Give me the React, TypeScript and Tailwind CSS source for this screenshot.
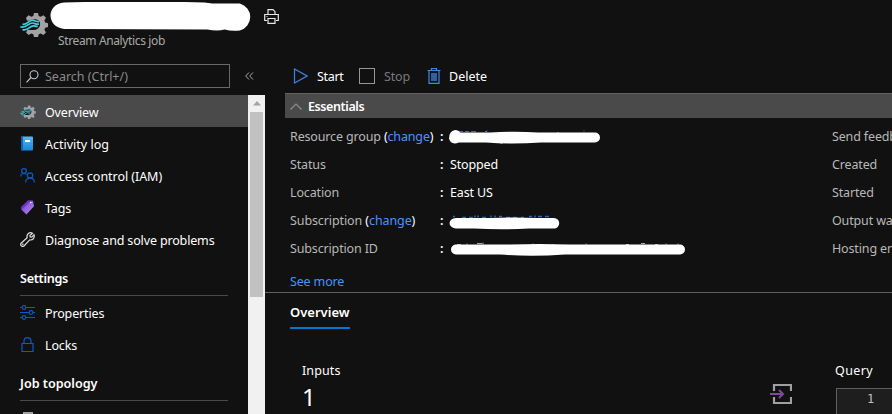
import type { ReactNode } from "react";

const GearStream = ({ className }: { className: string }) => (
  <svg className={className} viewBox="0 0 28 25" fill="none">
    <path
      fill="#a3a3a3"
      fillRule="evenodd"
      d="M14 1h4l.7 3 2 .8 2.700-1.600 2.600 2.600-1.600 2.700.8 2 2.800.7v3.800l-2.800.7-.8 2 1.600 2.700-2.600 2.600-2.700-1.600-2 .8-.7 2.800h-4l-.7-2.800-2-.8-2.700 1.600L6 20.400l1.600-2.700h4c4 1 7.400-.7 8.400-4.500.7-3.200-1.600-5.700-4.600-5.700-3.400 0-5 1.300-8.400 1.300L6 5.800l2.600-2.600 2.700 1.600 2-.8z"
    />
    <path d="M8 9.500c3-2.500 7-3 11-.5l1 3-2 3.500-6 2.500-6-1z" fill="#111" />
    <path d="M2.500 12.200c5 1 6-4 10-4 2.500 0 3.500 1.800 6.500 1.400" stroke="#45cde0" strokeWidth="1.700" />
    <path d="M.3 14.800c6.500 1.700 7.700-3.800 12-3.800 2.500 0 3.500 1.800 6.700 1" stroke="#45cde0" strokeWidth="1.700" />
    <path d="M2.500 17.600c6 1.500 7-3.800 10.800-3.800 2 0 2.500 1 4.500.6" stroke="#45cde0" strokeWidth="1.700" />
  </svg>
);

const Printer = () => (
  <svg className="h-[15px] w-[15px]" viewBox="0 0 15 15" fill="none" stroke="#e6e6e6" strokeWidth="1.2">
    <path d="M4 5.500V.7h5l2 2v2.800M3 11.500H.7v-6h13.600v6H12M4 9.500h7v4.800H4zM2.500 7.500h1" />
  </svg>
);

const SearchIcon = () => (
  <svg className="h-[13px] w-[13px]" viewBox="0 0 13 13" fill="none" stroke="#c8c8c8" strokeWidth="1.100">
    <circle cx="8" cy="4.700" r="4" />
    <path d="M5 7.500.5 12.300" />
  </svg>
);

const Book = () => (
  <svg className="h-[15px] w-[15px]" viewBox="0 0 15 15">
    <defs>
      <linearGradient id="book" x1="0" y1="0" x2="0" y2="1">
        <stop stopColor="#5ab7f5" />
        <stop offset="1" stopColor="#1688d9" />
      </linearGradient>
    </defs>
    <rect x="1" y=".5" width="12" height="14" rx="1" fill="url(#book)" />
    <path d="M1 1.500q0-1 1-1h1v14H2q-1 0-1-1z" fill="#0868b7" />
    <path d="M5 4h5v2H5z" fill="#fff" />
  </svg>
);

const People = () => (
  <svg className="h-[15px] w-[15px]" viewBox="0 0 15 15" fill="none" stroke="#0d5bc4" strokeWidth="1.200">
    <circle cx="4" cy="3" r="2.400" />
    <path d="M.6 8.500C.7 6.500 2 5.500 4 5.500c1 0 1.800.3 2.400.9" />
    <circle cx="10" cy="7.500" r="2.700" />
    <path d="M5.600 14.500c0-2.800 1.700-4.300 4.400-4.300s4.400 1.500 4.400 4.300" />
  </svg>
);

const Tag = () => (
  <svg className="h-[15px] w-[15px]" viewBox="0 0 15 15">
    <defs>
      <linearGradient id="tag" x1="0" y1="0" x2="1" y2="1">
        <stop stopColor="#7139d0" />
        <stop offset="1" stopColor="#ba91ee" />
      </linearGradient>
    </defs>
    <path d="M8 .5 13 .7l1 5.500-7.600 8.300L1.500 9.700 1.300 7z" fill="url(#tag)" />
    <path d="M8 .5 1.300 7l.2 2.700L9 2.500l4-1.800z" fill="#6b32c8" />
    <circle cx="10.800" cy="2.500" r=".8" fill="#fff" />
  </svg>
);

const Wrench = () => (
  <svg className="h-[15px] w-[15px]" viewBox="0 0 15 15" fill="none" stroke="#dedede" strokeWidth="1.200">
    <path d="M12.500 1.300 9.900 3.500l.2 1.500 1.600.2L14 2.800c1 2.700-1 5.700-4.300 5.100L4 14c-1.900 1.400-4.200-.8-2.900-2.800l6-5.500C6.300 2.200 9.500-.5 12.500 1.300z" />
    <circle cx="2.800" cy="12.300" r=".3" />
  </svg>
);

const Sliders = () => (
  <svg className="h-[15px] w-[15px]" viewBox="0 0 15 15" fill="none" stroke="#0d5bc4" strokeWidth="1.100">
    <path d="M0 2.500h2m4 0h9M0 7.500h9m4 0h2M0 12.500h2m4 0h9" />
    <circle cx="4" cy="2.500" r="1.900" />
    <circle cx="11" cy="7.500" r="1.900" />
    <circle cx="4" cy="12.500" r="1.900" />
  </svg>
);

const Lock = () => (
  <svg className="h-[15px] w-[15px]" viewBox="0 0 15 15" fill="none" stroke="#0d5bc4" strokeWidth="1.200">
    <path d="M2 6.500h11v8H2zM4 6.500V4.300C4 2 5.300.6 7.500.6S11 2 11 4.300v2.200" />
  </svg>
);

const NavItem = ({ icon, children, active }: { icon: ReactNode; children: ReactNode; active?: boolean }) => (
  <div className={`flex h-8 shrink-0 items-center pl-5 pt-[2px] text-white ${active ? "bg-[#4a4a4a]" : ""}`}>
    <span className="flex w-[25px] shrink-0 pb-px">{icon}</span>
    <span className="pt-[2px]">{children}</span>
  </div>
);

const NavHeading = ({ children }: { children: ReactNode }) => (
  <div className="ml-5 flex h-[41px] w-[208px] shrink-0 items-center border-b border-[#4a4a4a] pt-[8px] text-[12.6px] font-semibold text-white">
    {children}
  </div>
);

const Change = () => (
  <span className="text-white">
    (<a className="text-[#4894fe]">change</a>)
  </span>
);

const StrokeGroup = () => (
  <svg className="-ml-[1px] h-[18px] w-[154px]" viewBox="0 0 154 18">
    <path d="M10 3.500h4m2 0h4m2 0h5m9 0h2v-1m70 2h2m25-1v-1" stroke="#3770c4" />
    <path d="M51 15h3" stroke="#3770c4" strokeWidth="2" />
    <path d="M6 2q4 0 5 2.500h30q25-1.500 48 0h57a5 5 0 0 1 0 10H92q-30 2-55 0H10q-8 3-10-4Q0 3 6 2z" fill="#fff" />
  </svg>
);

const StrokeSubscription = () => (
  <svg className="-ml-[1px] mt-px h-[18px] w-[112px]" viewBox="0 0 112 18">
    <path d="M4 3.500h2m7 1h4m3 0h4m2-2v2m3-2v2m4 0h4m5-2v2m4-2v2m4-1h3m4 1h4m3 0h4m4 0h3m5-1h3m3-1v2m3-1h4m3 0h4" stroke="#2d66b6" strokeWidth="1.500" />
    <path d="M7 5h35q22-1 45 0h18a5 5 0 0 1 0 10.500H80q-28 1.500-55 0H7C-2 14.500-1 5.500 7 5z" fill="#fff" />
  </svg>
);

const StrokeId = () => (
  <svg className="h-[18px] w-[237px]" viewBox="0 0 237 18">
    <path d="M7 4.500h4m6-1v1m10-1h5m1-1v2m50-1v1m20 0h1m32-1v1m40 0h3m12-1h4m10 1h3m8-1v1m12-1v1" stroke="#aaa" />
    <path d="M6 4.500h54q28-1 60 0h110a5 5 0 0 1 0 10H115q-34 2.500-65 0H6a5 5 0 0 1 0-10z" fill="#fff" />
  </svg>
);

const Row = ({ label, value, right }: { label: ReactNode; value: ReactNode; right: string }) => (
  <div className="flex h-7 items-center whitespace-nowrap">
    <div className="w-[150px] shrink-0 text-[#b8b8b8]">{label}</div>
    <div className="w-[10px] shrink-0 font-semibold text-white">:</div>
    <div className="w-[382px] shrink-0 text-white">{value}</div>
    <div className="text-[#b8b8b8]">{right}</div>
  </div>
);

export default function App() {
  return (
    <div className="flex h-[414px] w-[892px] flex-col overflow-hidden bg-[#111111] font-['Noto_Sans',sans-serif] text-[12.5px] leading-[18px] tracking-[-0.15px]">
      <header className="flex h-[60px] shrink-0 pl-5">
        <GearStream className="mt-3 h-[25px] w-[28px]" />
        <div className="ml-[2px] w-[201px]">
          <svg className="mt-[2px] block h-[30px] w-[201px]" viewBox="0 0 201 30">
            <path d="M14 .5Q85-1.500 152 .5l8 1h27a14 14 0 0 1 0 27q-8 1-15-1-7 2-17 0Q80 27 14 27C-4 25-4 2 14 .5z" fill="#fff" transform="scale(1.015 1)" />
          </svg>
          <div className="ml-2 text-[12px] leading-[18px] tracking-[-0.37px] text-[#a9a9a9]">Stream Analytics job</div>
        </div>
        <div className="ml-[13px] mt-[9px]"><Printer /></div>
      </header>
      <div className="flex min-h-0 flex-1">
        <aside className="flex w-[265px] shrink-0 flex-col">
          <div className="flex h-[35px] shrink-0 pl-5 pt-1">
            <div className="flex h-6 w-[210px] items-center border border-[#696969] pl-[5px] text-[#8a8a8a]">
              <SearchIcon />
              <span className="ml-[6px] pt-px tracking-[0px]">Search (Ctrl+/)</span>
            </div>
            <svg className="ml-[15px] mt-[8px] h-2 w-[9px]" viewBox="0 0 9 8" fill="none" stroke="#a8a8a8">
              <path d="M4 .5.700 4 4 7.500M8 .5 4.700 4 8 7.500" />
            </svg>
          </div>
          <div className="flex min-h-0 flex-1">
            <nav className="flex w-[248px] flex-col overflow-hidden">
              <NavItem active icon={<GearStream className="h-[14px] w-[16px]" />}>Overview</NavItem>
              <NavItem icon={<Book />}><span className="tracking-[0px]">Activity log</span></NavItem>
              <NavItem icon={<People />}><span className="tracking-[-0.05px]">Access control (IAM)</span></NavItem>
              <NavItem icon={<Tag />}>Tags</NavItem>
              <NavItem icon={<Wrench />}>Diagnose and solve problems</NavItem>
              <NavHeading><span className="tracking-[-0.28px]">Settings</span></NavHeading>
              <NavItem icon={<Sliders />}>Properties</NavItem>
              <NavItem icon={<Lock />}>Locks</NavItem>
              <NavHeading><span className="tracking-[0px]">Job topology</span></NavHeading>
              <div className="ml-[23px] mt-[11px] h-4 w-[10px] shrink-0 border-t-2 border-[#a0a0a0] bg-[#777]" />
            </nav>
            <div className="flex w-[17px] flex-col items-center bg-[#f1f1f1]">
              <div className="flex h-[17px] items-center">
                <svg className="h-[5px] w-[8px]" viewBox="0 0 8 5"><path d="M4 0 8 4.500H0z" fill="#a3a3a3" /></svg>
              </div>
              <div className="h-[185px] w-[13px] bg-[#c1c1c1]" />
            </div>
          </div>
        </aside>
        <main className="min-w-0 flex-1 overflow-hidden">
          <div className="flex h-[33px] items-center pl-[28px] text-white">
            <svg className="-mt-[2px] h-4 w-[15px]" viewBox="0 0 15 16" fill="none" stroke="#3f82df" strokeWidth="1.200"><path d="M1.500 1v14L14 8z" /></svg>
            <span className="ml-[9px] w-[42px] tracking-[-0.3px]">Start</span>
            <div className="-mt-[2px] h-4 w-4 border border-[#969696]" />
            <span className="ml-[9px] w-[43px] text-[#797979]">Stop</span>
            <svg className="-mt-[2px] h-4 w-[14px]" viewBox="0 0 14 16" fill="none" stroke="#4387e5">
              <path d="M2 3v12.400h10V3M.5 2.500h13M4.500 2.500v-2h5v2" strokeWidth="1.200" />
              <path d="M4 5h6v8H4z" fill="#315f9f" stroke="none" />
            </svg>
            <span className="ml-[8px] tracking-[0px]">Delete</span>
          </div>
          <div className="ml-5 flex h-[25px] items-center border-t border-[#626262] bg-[#4a4a4a] pl-[5px] text-[12.5px] font-semibold text-white">
            <svg className="h-[7px] w-3" viewBox="0 0 12 7" fill="none" stroke="#8d8d8d" strokeWidth="1.200"><path d="m.5 6.500 5.500-5.500 5.500 5.500" /></svg>
            <span className="ml-[6px] pt-px tracking-[-0.4px]">Essentials</span>
          </div>
          <section className="h-[175px] border-b border-[#606060] pl-[25px] pt-[5px]">
            <Row label={<>Resource group <Change /></>} value={<StrokeGroup />} right="Send feedback" />
            <Row label="Status" value="Stopped" right="Created" />
            <Row label="Location" value="East US" right="Started" />
            <Row label={<span className="tracking-[-0.1px]">Subscription <Change /></span>} value={<StrokeSubscription />} right="Output watermark" />
            <Row label="Subscription ID" value={<StrokeId />} right="Hosting environment" />
            <a className="mt-[10px] block text-[#4894fe]">See more</a>
          </section>
          <div className="ml-[25px] h-[36px] w-[60px] border-b-2 border-[#0078d4] pt-[10px] text-[13px] font-semibold tracking-[0px] text-white">Overview</div>
          <section className="flex pl-[37px] pt-[33px] text-white">
            <div className="w-[468px]">
              <div className="tracking-[0.1px]">Inputs</div>
              <div className="text-[24px] leading-[33px]">1</div>
            </div>
            <svg className="mt-[22px] h-[20px] w-[22px]" viewBox="0 0 22 20" fill="none" strokeWidth="2">
              <path d="M4 7V1h17M21 0v7M4 13v6h17M21 20v-7" stroke="#a0a0a0" strokeWidth="2.200" />
              <path d="M0 10h13M9 6l4 4-4 4" stroke="#804998" />
            </svg>
            <div className="ml-[43px] flex-1">
              <div className="tracking-[0.4px]">Query</div>
              <div className="ml-[1px] mt-[8px] h-12 border-l border-t border-[#606060] bg-[#1e1e1e] pl-[30px] pt-px font-['DejaVu_Sans_Mono',monospace] text-[12px] text-[#c0c0c0]">1</div>
            </div>
          </section>
        </main>
      </div>
    </div>
  );
}
